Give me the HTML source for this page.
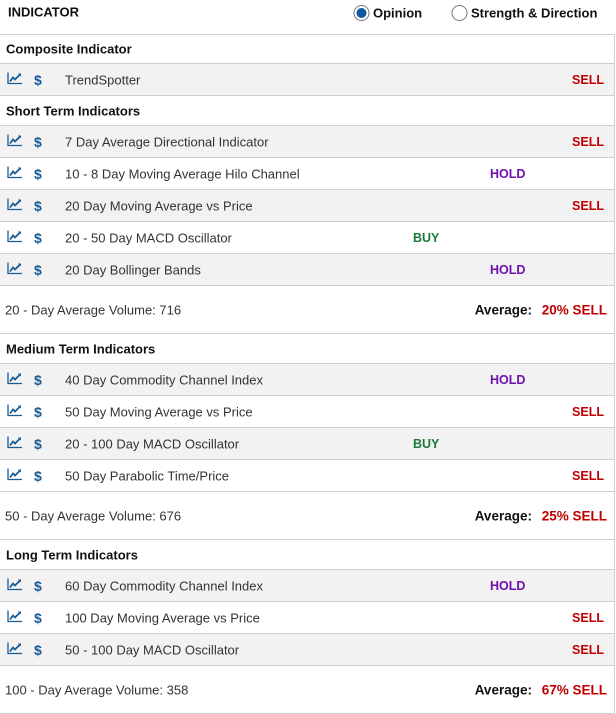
<!DOCTYPE html>
<html><head><meta charset="utf-8"><style>
body{margin:0;width:616px;height:711px;overflow:hidden;background:#fff;font-family:"Liberation Sans",sans-serif;font-size:13px;color:#333;position:relative}
.r{position:absolute;left:0;width:615px;border-bottom:1px solid #cfcfcf;border-right:1px solid #cfcfcf;box-sizing:border-box}
.g{background:#f2f2f2}
.r span{position:absolute;top:50%;transform:translateY(-50%);white-space:nowrap}
.h{font-weight:bold;color:#111;left:6px}
.n{left:65px}
.s{right:10px;color:#c00000;font-weight:bold;font-size:12.5px}
.ho{left:490px;color:#7010b0;font-weight:bold;font-size:12.5px}
.b{left:413px;color:#1a7a3a;font-weight:bold;font-size:12.5px}
.ic{left:7px}
.d{left:34px;color:#1a5a96;font-weight:bold;font-size:14px}
.v{left:5px;color:#333}
.av{right:7px;font-weight:bold;font-size:13.5px;color:#111}
.av b{color:#c00000;margin-left:6px}
</style></head><body>
<div class="r" style="top:0;height:35px;border-right:none"><span class="h" style="left:8px;top:12px">INDICATOR</span>
<span style="left:353px;top:13px;font-weight:bold;color:#111;display:flex;align-items:center"><svg width="17" height="17" style="margin-right:3px"><circle cx="8.5" cy="8.5" r="7.5" fill="#fff" stroke="#777"/><circle cx="8.5" cy="8.5" r="5" fill="#0d5aa0"/></svg>Opinion</span>
<span style="left:451px;top:13px;font-weight:bold;color:#111;display:flex;align-items:center"><svg width="17" height="17" style="margin-right:3px"><circle cx="8.5" cy="8.5" r="7.5" fill="#fff" stroke="#777"/></svg>Strength &amp; Direction</span></div>
<div id="c"></div>
<script>
var I='<span class="ic"><svg width="15" height="12" viewBox="0 0 15 12"><path d="M1 0V11H15" stroke="#1a5a96" stroke-width="1.3" fill="none"/><path d="M3 9L6 5L8 7L13 2" stroke="#1a5a96" stroke-width="1.8" fill="none"/><path d="M11 1H14V4Z" fill="#1a5a96"/></svg></span><span class="d">$</span>';
var rows=[
['h',34,30,'Composite Indicator'],
['x',64,'TrendSpotter','s',1],
['h',96,30,'Short Term Indicators'],
['x',126,'7 Day Average Directional Indicator','s',1],
['x',158,'10 - 8 Day Moving Average Hilo Channel','ho',0],
['x',190,'20 Day Moving Average vs Price','s',1],
['x',222,'20 - 50 Day MACD Oscillator','b',0],
['x',254,'20 Day Bollinger Bands','ho',1],
['v',286,48,'20 - Day Average Volume: 716','20% SELL'],
['h',334,30,'Medium Term Indicators'],
['x',364,'40 Day Commodity Channel Index','ho',1],
['x',396,'50 Day Moving Average vs Price','s',0],
['x',428,'20 - 100 Day MACD Oscillator','b',1],
['x',460,'50 Day Parabolic Time/Price','s',0],
['v',492,48,'50 - Day Average Volume: 676','25% SELL'],
['h',540,30,'Long Term Indicators'],
['x',570,'60 Day Commodity Channel Index','ho',1],
['x',602,'100 Day Moving Average vs Price','s',0],
['x',634,'50 - 100 Day MACD Oscillator','s',1],
['v',666,48,'100 - Day Average Volume: 358','67% SELL']];
var h='';
rows.forEach(function(r){
if(r[0]=='h')h+='<div class="r" style="top:'+r[1]+'px;height:'+r[2]+'px"><span class="h">'+r[3]+'</span></div>';
else if(r[0]=='x'){var t={s:'SELL',ho:'HOLD',b:'BUY'}[r[3]];h+='<div class="r'+(r[4]?' g':'')+'" style="top:'+r[1]+'px;height:32px">'+I+'<span class="n">'+r[2]+'</span><span class="'+r[3]+'">'+t+'</span></div>';}
else h+='<div class="r" style="top:'+r[1]+'px;height:'+r[2]+'px"><span class="v">'+r[3]+'</span><span class="av">Average: <b>'+r[4]+'</b></span></div>';
});
document.getElementById('c').innerHTML=h;
</script>
</body></html>
